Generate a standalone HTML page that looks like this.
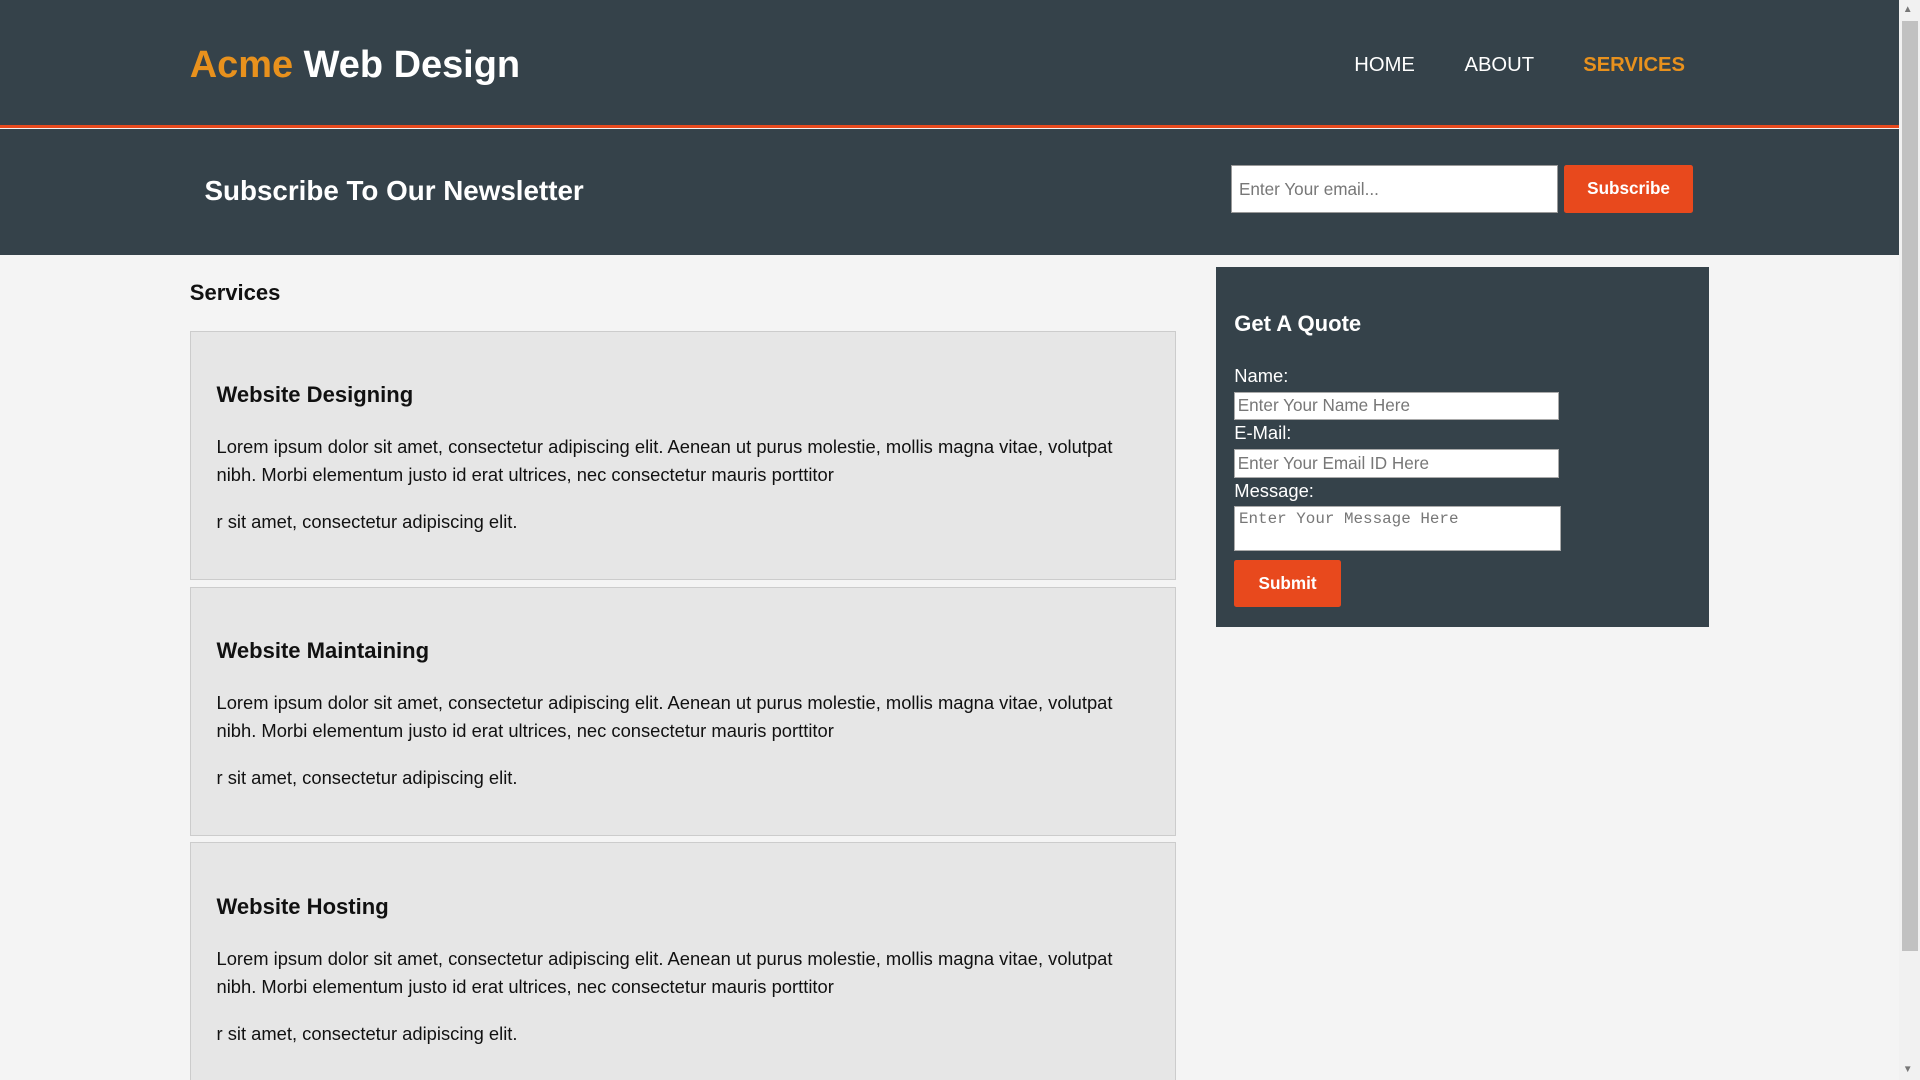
<!DOCTYPE html>
<html><head><style>
html,body{margin:0;padding:0;overflow:hidden;width:1920px;height:1080px;background:#f4f4f4}
#w{zoom:1.2244898;width:1568px;height:882px;position:relative;font-family:"Liberation Sans",Arial,sans-serif;background:#f4f4f4;overflow:hidden}
.a{position:absolute;white-space:nowrap}
header{position:absolute;left:0;top:0;width:1551px;height:102px;background:#35424a;border-bottom:3px solid #e8491d}
.nl{position:absolute;left:0;top:105px;width:1551px;height:103px;background:#35424a}
.card{position:absolute;left:155px;width:804px;height:202px;background:#e6e6e6;border:1px solid #ccc}
.card h3{position:absolute;left:21px;top:41px;margin:0;font-size:18px;font-weight:bold;color:#111}
.card p{position:absolute;left:21px;margin:0;font-size:15px;line-height:23px;color:#111;width:755px}
.inp{position:absolute;background:#fff;border:1px solid #aaa;box-sizing:border-box;color:#777;font-size:14px}
.lab{position:absolute;left:1008px;color:#fff;font-size:15px}
</style></head><body><div id="w">
<header>
<div class="a" style="left:155px;top:36px;font-size:31px;font-weight:bold;color:#fff"><span style="color:#e8911d">Acme</span> Web Design</div>
<div class="a" style="left:1106px;top:44px;font-size:16.5px;color:#fff">HOME</div>
<div class="a" style="left:1196px;top:44px;font-size:16.5px;color:#fff">ABOUT</div>
<div class="a" style="left:1293px;top:44px;font-size:16.5px;color:#e8911d;font-weight:bold">SERVICES</div>
</header>
<div class="nl"></div>
<div class="a" style="left:167px;top:143px;font-size:22.7px;font-weight:bold;color:#fff">Subscribe To Our Newsletter</div>
<div class="inp" style="left:1005px;top:135px;width:267px;height:39px;padding:10px 6px;font-size:14px;border-color:#999">Enter Your email...</div>
<div class="a" style="left:1277px;top:135px;width:106px;height:39px;background:#e8491d;border-radius:2px;color:#fff;font-weight:bold;font-size:14px;text-align:center;line-height:39px">Subscribe</div>

<div class="a" style="left:155px;top:229px;font-size:18px;font-weight:bold;color:#111">Services</div>

<div class="card" style="top:270px"><h3>Website Designing</h3><p style="top:83px">Lorem ipsum dolor sit amet, consectetur adipiscing elit. Aenean ut purus molestie, mollis magna vitae, volutpat nibh. Morbi elementum justo id erat ultrices, nec consectetur mauris porttitor</p><p style="top:144px">r sit amet, consectetur adipiscing elit.</p></div>
<div class="card" style="top:479px"><h3>Website Maintaining</h3><p style="top:83px">Lorem ipsum dolor sit amet, consectetur adipiscing elit. Aenean ut purus molestie, mollis magna vitae, volutpat nibh. Morbi elementum justo id erat ultrices, nec consectetur mauris porttitor</p><p style="top:144px">r sit amet, consectetur adipiscing elit.</p></div>
<div class="card" style="top:688px"><h3>Website Hosting</h3><p style="top:83px">Lorem ipsum dolor sit amet, consectetur adipiscing elit. Aenean ut purus molestie, mollis magna vitae, volutpat nibh. Morbi elementum justo id erat ultrices, nec consectetur mauris porttitor</p><p style="top:144px">r sit amet, consectetur adipiscing elit.</p></div>

<div class="a" style="left:993px;top:218px;width:403px;height:294px;background:#35424a"></div>
<div class="a" style="left:1008px;top:254px;font-size:18px;font-weight:bold;color:#fff">Get A Quote</div>
<div class="lab" style="top:298px">Name:</div>
<div class="inp" style="left:1008px;top:320px;width:265px;height:23px;padding:2px 2px">Enter Your Name Here</div>
<div class="lab" style="top:345px">E-Mail:</div>
<div class="inp" style="left:1008px;top:367px;width:265px;height:23px;padding:2px 2px">Enter Your Email ID Here</div>
<div class="lab" style="top:392px">Message:</div>
<div class="inp" style="left:1008px;top:413px;width:267px;height:37px;padding:3px 3px;font-family:'Liberation Mono',monospace;font-size:13px">Enter Your Message Here</div>
<div class="a" style="left:1008px;top:457px;width:87px;height:39px;background:#e8491d;color:#fff;font-weight:bold;font-size:14px;text-align:center;line-height:39px;border-radius:2px">Submit</div>

<div class="a" style="left:1551px;top:0;width:17px;height:882px;background:#f1f1f1"></div>
<div class="a" style="left:1553px;top:17px;width:13px;height:760px;background:#c1c1c1"></div>
<div class="a" style="left:1554px;top:3px;font-size:8px;color:#777">▲</div>
<div class="a" style="left:1554px;top:869px;font-size:8px;color:#777">▼</div>
</div></body></html>
